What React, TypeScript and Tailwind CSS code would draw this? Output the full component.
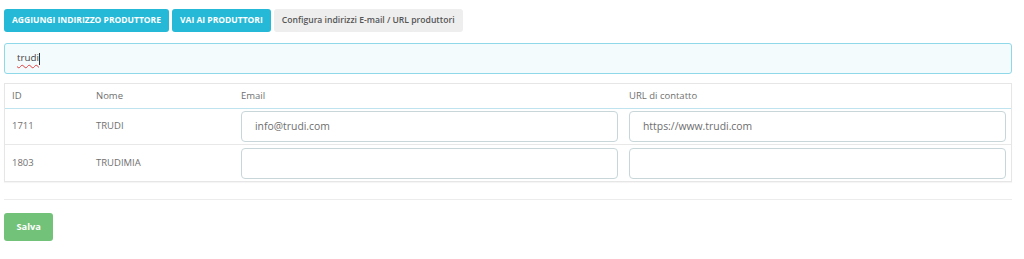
import React from "react";

const font = { fontFamily: '"Open Sans", "Noto Sans", sans-serif' };

function Cell({ children, className = "" }: { children?: React.ReactNode; className?: string }) {
  return <div className={`flex items-center pl-[7px] pr-[4px] ${className}`}>{children}</div>;
}

function Field({ value }: { value?: string }) {
  return (
    <div className="w-full h-[31px] border border-[#c8d6da] rounded-[4px] bg-white flex items-center px-[13px] text-[10.4px] text-[#6e6e6e]">
      {value}
    </div>
  );
}

const rows = [
  { id: "1711", name: "TRUDI", email: "info@trudi.com", url: "https://www.trudi.com" },
  { id: "1803", name: "TRUDIMIA", email: "", url: "" },
];

export default function App() {
  return (
    <div className="w-[1024px] h-[259px] bg-white px-[4px] pt-[9px]" style={font}>
      <div className="flex gap-[3px]">
        <button className="h-[23px] px-[8px] rounded-[3px] bg-[#25b9d7] text-white text-[8.5px] font-bold uppercase">
          Aggiungi indirizzo produttore
        </button>
        <button className="h-[23px] px-[8px] rounded-[3px] bg-[#25b9d7] text-white text-[8.5px] font-bold uppercase">
          Vai ai produttori
        </button>
        <button className="h-[23px] px-[8px] rounded-[3px] bg-[#eeeeee] text-[#555] text-[8.6px] font-semibold">
          Configura indirizzi E-mail / URL produttori
        </button>
      </div>

      <div className="mt-[11px] w-[1008px] h-[31px] border-[1.5px] border-[#8fd8e9] rounded-[3px] bg-[#f4fbfd] flex items-center pl-[12px] text-[9.8px] text-[#444]">
        <span className="underline decoration-wavy decoration-[#e04040] decoration-[1px] underline-offset-[3px]">trudi</span>
        <span className="w-px h-[12px] bg-[#333]" />
      </div>

      <div className="mt-[9px] w-[1008px] border border-[#e6e6e6] shadow-[0_1px_1px_rgba(0,0,0,0.04)] text-[9.5px] text-[#707070]">
        <div className="grid grid-cols-[84px_145px_388px_1fr] h-[25px] border-b border-[#bfe3ef]">
          <Cell>ID</Cell>
          <Cell>Nome</Cell>
          <Cell>Email</Cell>
          <Cell>URL di contatto</Cell>
        </div>
        {rows.map((r, i) => (
          <div
            key={r.id}
            className={`grid grid-cols-[84px_145px_388px_1fr] h-[36px] ${i === 0 ? "border-b border-[#e8e8e8]" : ""}`}
          >
            <Cell>{r.id}</Cell>
            <Cell>{r.name}</Cell>
            <Cell>
              <Field value={r.email} />
            </Cell>
            <Cell className="pr-[5px]">
              <Field value={r.url} />
            </Cell>
          </div>
        ))}
      </div>

      <div className="mt-[17px] w-[1008px] border-t border-[#ececec]" />

      <button className="mt-[13px] h-[28px] px-[12.5px] rounded-[3px] bg-[#72c279] text-white text-[9.3px] font-bold">
        Salva
      </button>
    </div>
  );
}
